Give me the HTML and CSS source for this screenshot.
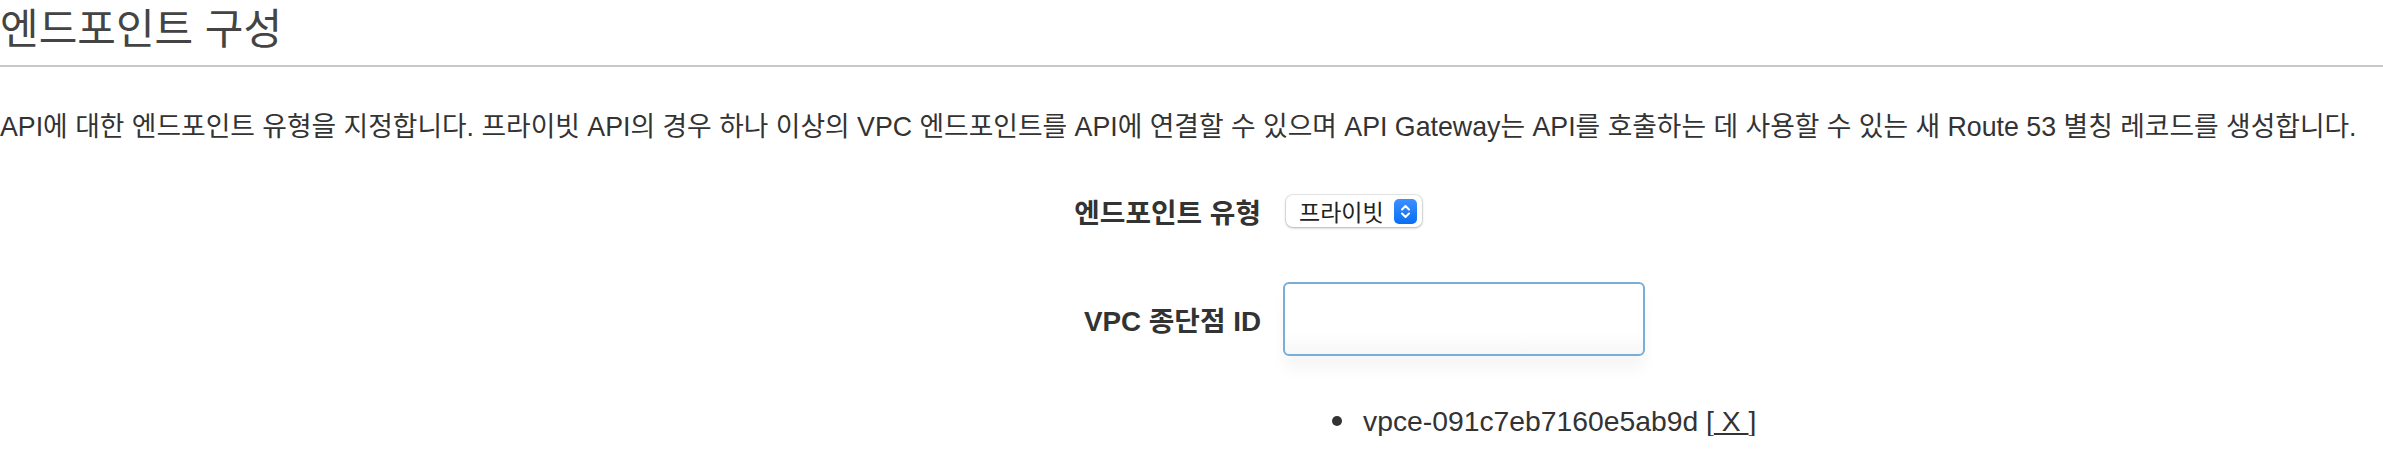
FILE: index.html
```html
<!DOCTYPE html>
<html lang="ko">
<head>
<meta charset="utf-8">
<title>엔드포인트 구성</title>
<link rel="stylesheet" href="styles.css">
</head>
<body>
<h2 class="title">엔드포인트 구성</h2>
<p class="desc">API에 대한 엔드포인트 유형을 지정합니다. 프라이빗 API의 경우 하나 이상의 VPC 엔드포인트를 API에 연결할 수 있으며 API Gateway는 API를 호출하는 데 사용할 수 있는 새 Route 53 별칭 레코드를 생성합니다.</p>
<div class="form">
  <div class="label row-select">엔드포인트 유형</div>
  <div class="control row-select">
    <div class="select">
      <span class="select-text">프라이빗</span>
      <span class="stepper">
        <svg width="23" height="25" viewBox="0 0 23 25">
          <path d="M8 10.5 L11.5 7 L15 10.5" fill="none" stroke="#fff" stroke-width="2" stroke-linecap="round" stroke-linejoin="round"/>
          <path d="M8 14.5 L11.5 18 L15 14.5" fill="none" stroke="#fff" stroke-width="2" stroke-linecap="round" stroke-linejoin="round"/>
        </svg>
      </span>
    </div>
  </div>
  <div class="label row-input">VPC 종단점 ID</div>
  <div class="control row-input">
    <div class="input"></div>
  </div>
  <div class="label"></div>
  <div class="control">
    <ul class="list">
      <li>vpce-091c7eb7160e5ab9d [<a class="remove"> X </a>]</li>
    </ul>
  </div>
</div>
</body>
</html>
```

FILE: styles.css
```css
html, body {
  margin: 0;
  padding: 0;
  background: #fff;
}
body {
  font-family: "Liberation Sans", "Noto Sans CJK KR", sans-serif;
  color: #333;
}
.title {
  margin: 0;
  height: 65px;
  line-height: 60px;
  font-size: 42px;
  font-weight: normal;
  color: #444;
  border-bottom: 2px solid #c8c8c8;
}
.desc {
  margin: 0;
  padding-top: 44px;
  line-height: 32px;
  font-size: 26.75px;
  color: #333;
  white-space: nowrap;
}
.form {
  display: grid;
  grid-template-columns: 1261px 1fr;
  column-gap: 23px;
  margin-top: 52px;
}
.label {
  text-align: right;
  font-weight: bold;
  font-size: 27.8px;
  color: #333;
  display: flex;
  align-items: center;
  justify-content: flex-end;
}
.control {
  display: flex;
  align-items: center;
}
.row-select {
  height: 32px;
}
.row-input {
  margin-top: 55px;
  height: 74px;
}
.select {
  margin-left: 2px;
  width: 136px;
  height: 32px;
  box-sizing: border-box;
  border-radius: 7px;
  background: #fff;
  box-shadow: 0 0 0 1px rgba(0,0,0,0.08), 0 1px 3px rgba(0,0,0,0.25);
  display: flex;
  align-items: center;
  justify-content: space-between;
  padding: 0 5px 0 13px;
}
.select-text {
  font-size: 23px;
  color: #222;
}
.stepper {
  width: 23px;
  height: 25px;
  border-radius: 5px;
  background: linear-gradient(#3d90ff, #0a6ef2);
  display: flex;
}
.input {
  margin-left: -1px;
  width: 362px;
  height: 74px;
  box-sizing: border-box;
  border: 2px solid #79aed8;
  border-radius: 6px;
  background: linear-gradient(#fff 70%, #f7f7f7);
  box-shadow: 0 14px 14px rgba(0,0,0,0.035);
}
.list {
  margin: 50px 0 0 0;
  padding: 0 0 0 48px;
  list-style: none;
  font-size: 28.3px;
  line-height: 30px;
  color: #333;
}
.list li {
  display: flex;
  align-items: center;
  white-space: pre;
}
.list li::before {
  content: "";
  width: 10px;
  height: 10px;
  border-radius: 50%;
  background: #333;
  margin-right: 21px;
}
.remove {
  text-decoration: underline;
  color: #333;
}
```
